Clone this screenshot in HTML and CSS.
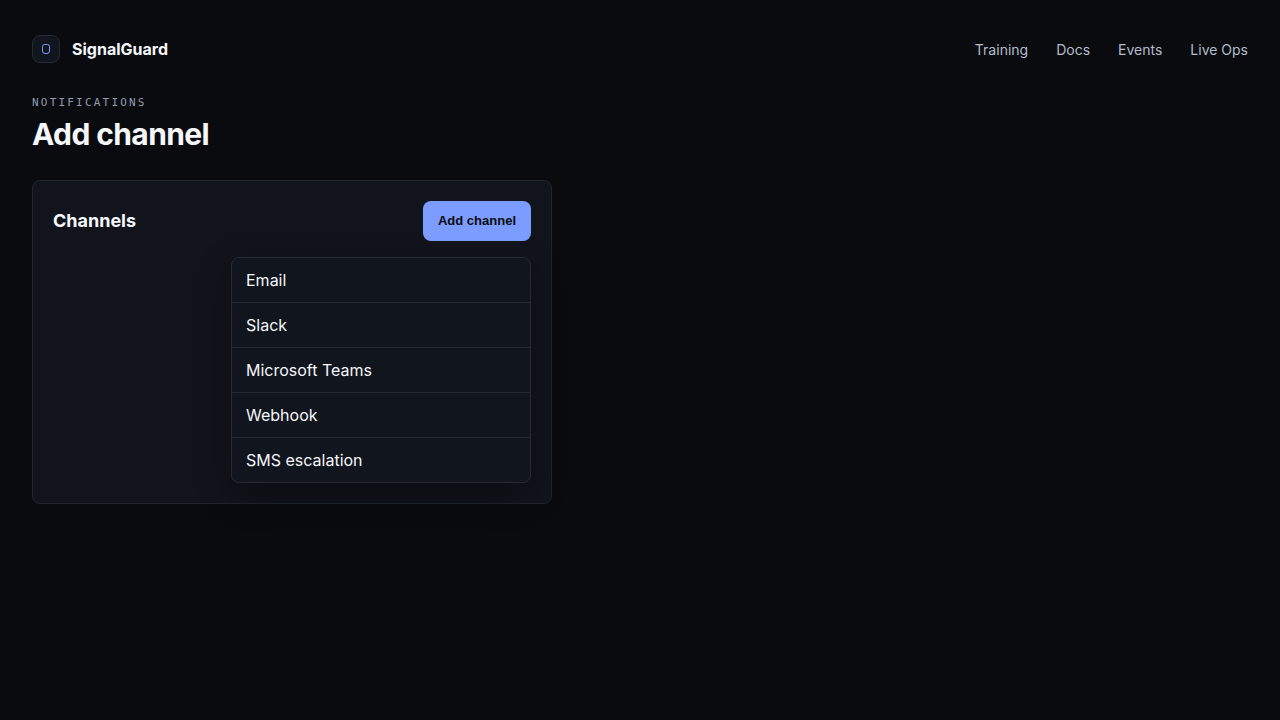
FILE: index.html
```html
<!DOCTYPE html>
<html lang="en">
<head>
    <meta charset="UTF-8">
    <meta name="viewport" content="width=device-width, initial-scale=1.0">
    <title>SignalGuard</title>
    <link rel="stylesheet" href="styles.css">
</head>
<body>
    <header class="topbar">
        <a class="brand" href="#">
            <span class="brand-mark">
                <svg width="8" height="10" viewBox="0 0 8 10" fill="none" aria-hidden="true">
                    <path d="M2.5 0.5h3a2 2 0 0 1 2 2v4.5a2.5 2.5 0 0 1-2.5 2.5h-2a2.5 2.5 0 0 1-2.5-2.5v-4.5a2 2 0 0 1 2-2z" stroke="#7c9cff"/>
                </svg>
            </span>
            <span>SignalGuard</span>
        </a>
        <nav class="nav">
            <a href="#">Training</a>
            <a href="#">Docs</a>
            <a href="#">Events</a>
            <a href="#">Live Ops</a>
        </nav>
    </header>

    <main>
        <p class="eyebrow">Notifications</p>
        <h1>Add channel</h1>

        <section class="card">
            <div class="card-head">
                <h2>Channels</h2>
                <button class="btn" type="button" aria-expanded="true" aria-controls="channelMenu">Add channel</button>
            </div>
            <div class="menu" id="channelMenu">
                <button type="button">Email</button>
                <button type="button">Slack</button>
                <button type="button">Microsoft Teams</button>
                <button type="button">Webhook</button>
                <button type="button">SMS escalation</button>
            </div>
        </section>
    </main>
</body>
</html>
```

FILE: styles.css
```css
* {
    box-sizing: border-box;
}

body {
    margin: 0;
    padding: 32px;
    background: #090b0f;
    color: #f5f7fb;
    font-family: Inter, sans-serif;
    font-size: 16px;
    line-height: 24px;
}

a {
    color: inherit;
    text-decoration: none;
}

.topbar {
    display: flex;
    align-items: center;
    justify-content: space-between;
    height: 34px;
    margin-bottom: 28px;
}

.brand {
    display: flex;
    align-items: center;
    gap: 12px;
    font-weight: 700;
}

.brand-mark {
    display: flex;
    align-items: center;
    justify-content: center;
    width: 28px;
    height: 28px;
    border: 1px solid #252b35;
    border-radius: 8px;
    background: #11151d;
}

.nav {
    display: flex;
    gap: 28px;
    padding-top: 2px;
    color: #b4bccb;
    font-size: 14px;
}

.eyebrow {
    margin: 0;
    color: #929bad;
    font-family: "DejaVu Sans Mono", monospace;
    font-size: 11px;
    line-height: 18px;
    letter-spacing: 0.2em;
    text-transform: uppercase;
}

h1 {
    margin: 4px 0 28px;
    font-size: 30px;
    font-weight: 700;
    line-height: 36px;
    letter-spacing: -0.02em;
}

h2 {
    margin: 0;
    font-size: 18px;
    font-weight: 700;
}

.card {
    max-width: 520px;
    padding: 20px;
    border: 1px solid #20252e;
    border-radius: 8px;
    background: #11141b;
}

.card-head {
    display: flex;
    align-items: center;
    justify-content: space-between;
    margin-bottom: 16px;
}

.btn {
    height: 40px;
    padding: 0 15px 2px;
    border: 0;
    border-radius: 8px;
    background: #7c9cff;
    color: #090b0f;
    font-family: "Liberation Sans", Arial, sans-serif;
    font-size: 13px;
    font-weight: 700;
    cursor: pointer;
}

.menu {
    max-width: 300px;
    margin-left: auto;
    overflow: hidden;
    border: 1px solid #252b35;
    border-radius: 8px;
    background: #11151d;
    box-shadow: 0 12px 32px rgba(0, 0, 0, 0.35);
}

.menu button {
    display: block;
    width: 100%;
    height: 45px;
    padding: 0 14px;
    border: 0;
    border-bottom: 1px solid #252b35;
    background: none;
    color: inherit;
    font: inherit;
    text-align: left;
    cursor: pointer;
}

.menu button:last-child {
    height: 44px;
    border-bottom: 0;
}
```
